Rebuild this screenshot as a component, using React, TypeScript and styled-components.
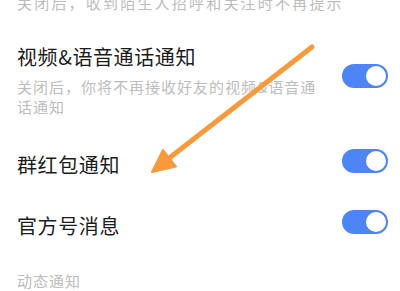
import React from "react";
import styled, {createGlobalStyle} from "styled-components";

const GlobalStyle = createGlobalStyle`
    html, body {
        margin: 0;
        padding: 0;
        background: #ffffff;
    }
    body {
        font-family: "Noto Sans CJK SC", "Noto Sans", sans-serif;
    }
`

const Page = styled.div`
    position: relative;
    width: 400px;
    height: 291px;
    overflow: hidden;
    padding: 0 12px 0 17px;
    box-sizing: border-box;
`

const Desc = styled.div`
    font-size: 15px;
    line-height: 20px;
    letter-spacing: 1px;
    color: #bcbcbc;
`

const TopDesc = styled(Desc)`
    margin-top: -7px;
    padding-bottom: 14px;
    letter-spacing: 2.2px;
    white-space: nowrap;
`

const Row = styled.div`
    display: flex;
    align-items: center;
    gap: 20px;
    padding: 17px 0 18px;
`

const TextCol = styled.div`
    flex: 1;
    min-width: 0;
`

const Title = styled.div`
    font-size: 20px;
    line-height: 26px;
    letter-spacing: 0.6px;
    color: #1c1c1c;
`

const Gap = styled.div<{h: number}>`
    height: ${props => props.h}px;
`

const Toggle = styled.div<{on?: boolean}>`
    flex: none;
    width: 46px;
    height: 24px;
    border-radius: 12px;
    background: ${props => props.on ? "#4d85f5" : "#d6d6d6"};
    display: flex;
    align-items: center;
    justify-content: ${props => props.on ? "flex-end" : "flex-start"};
    padding: 0 2px;
    box-sizing: border-box;
    margin-top: -9px;
`

const Knob = styled.div`
    width: 20px;
    height: 20px;
    border-radius: 50%;
    background: #ffffff;
`

const Section = styled(Desc)`
    margin-top: 14px;
    font-size: 15px;
    letter-spacing: 1px;
`

const ArrowLayer = styled.svg`
    position: absolute;
    left: 0;
    top: 0;
    pointer-events: none;
`

const items = [
    {title: "视频&语音通话通知", desc: "关闭后，你将不再接收好友的视频&语音通话通知"},
    {title: "群红包通知"},
    {title: "官方号消息"},
]

const App = () => {
    return (
        <Page>
            <GlobalStyle/>
            <TopDesc>关闭后，收到陌生人招呼和关注时不再提示</TopDesc>
            {items.map((item) => (
                <Row key={item.title}>
                    <TextCol>
                        <Title>{item.title}</Title>
                        {item.desc && <>
                            <Gap h={7}/>
                            <Desc>{item.desc}</Desc>
                        </>}
                    </TextCol>
                    <Toggle on><Knob/></Toggle>
                </Row>
            ))}
            <Section>动态通知</Section>

            {/* 주석 화살표 */}
            <ArrowLayer width="400" height="291" viewBox="0 0 400 291">
                <line x1="312" y1="47" x2="168" y2="159" stroke="#f79a3c" strokeWidth="5" strokeLinecap="round"/>
                <polygon points="152,172 176,166.5 163,150" fill="#f79a3c" strokeLinejoin="round" stroke="#f79a3c" strokeWidth="2"/>
            </ArrowLayer>
        </Page>
    )
}

export default App;
